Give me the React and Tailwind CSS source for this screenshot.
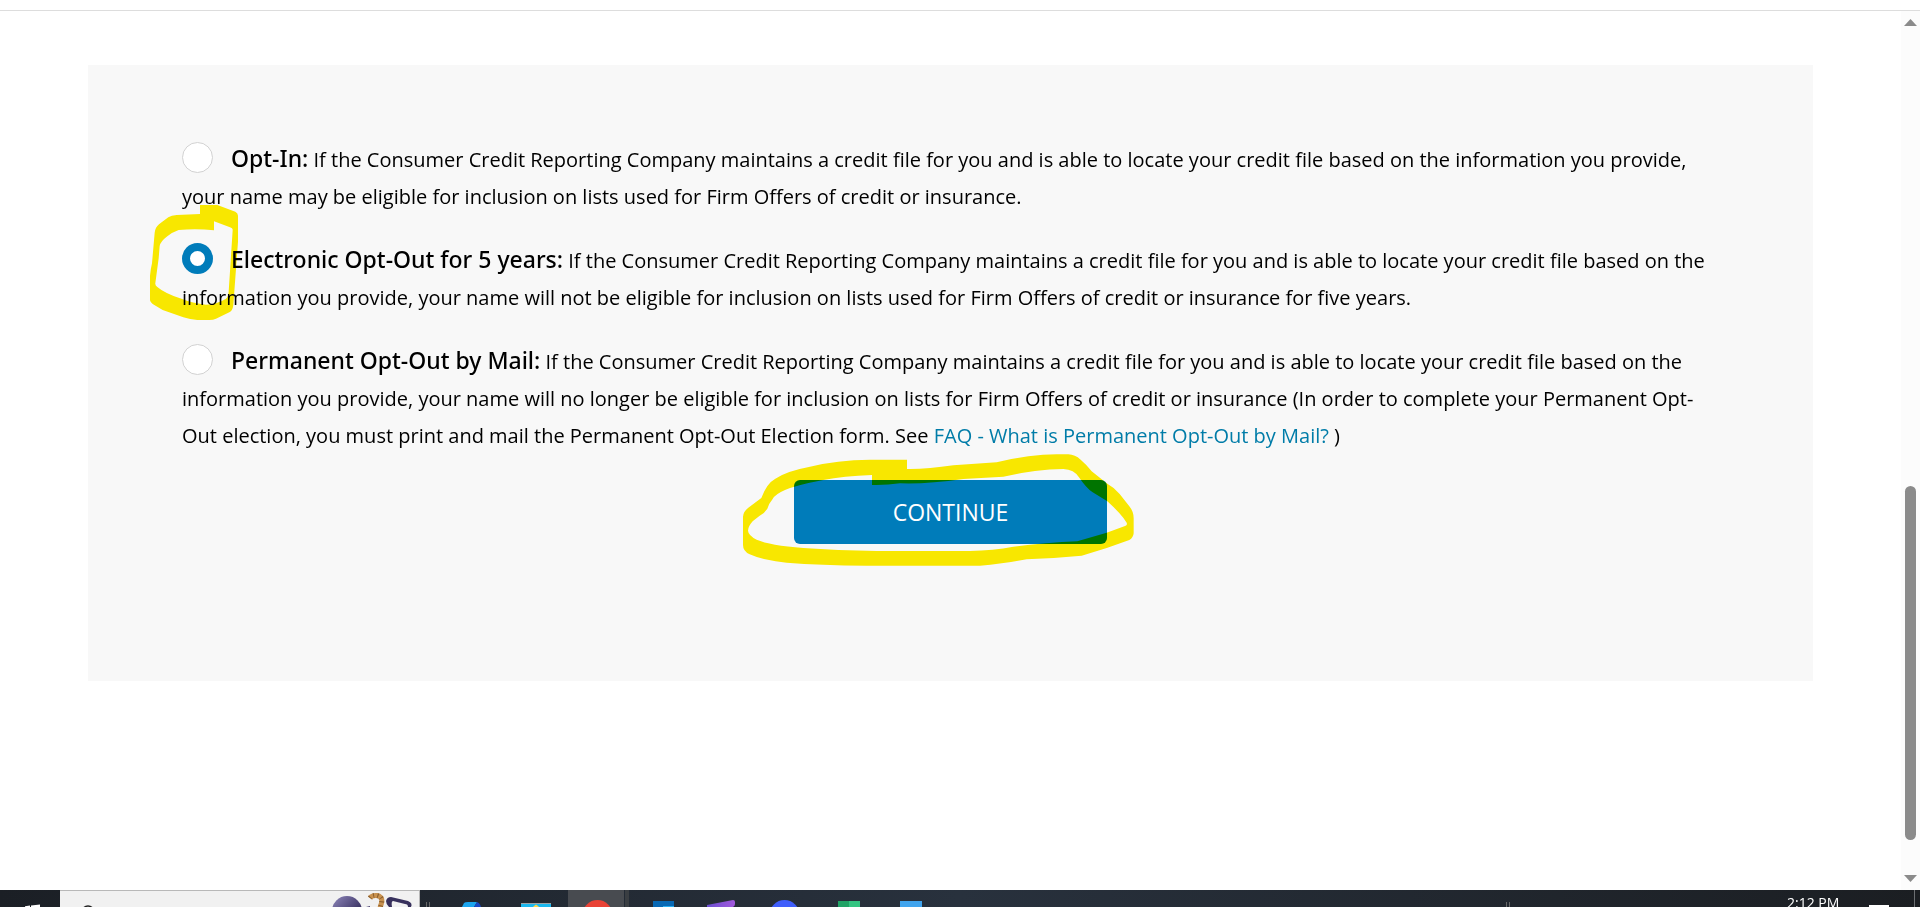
import React, { useState } from 'react';

const OPTIONS = [
    {
        id: 'opt-in',
        title: 'Opt-In:',
        text: 'If the Consumer Credit Reporting Company maintains a credit file for you and is able to locate your credit file based on the information you provide, your name may be eligible for inclusion on lists used for Firm Offers of credit or insurance.',
    },
    {
        id: 'opt-out-electronic',
        title: 'Electronic Opt-Out for 5 years:',
        text: 'If the Consumer Credit Reporting Company maintains a credit file for you and is able to locate your credit file based on the information you provide, your name will not be eligible for inclusion on lists used for Firm Offers of credit or insurance for five years.',
        marked: true,
    },
    {
        id: 'opt-out-mail',
        title: 'Permanent Opt-Out by Mail:',
        text: 'If the Consumer Credit Reporting Company maintains a credit file for you and is able to locate your credit file based on the information you provide, your name will no longer be eligible for inclusion on lists for Firm Offers of credit or insurance (In order to complete your Permanent Opt-Out election, you must print and mail the Permanent Opt-Out Election form. See ',
        link: 'FAQ - What is Permanent Opt-Out by Mail?',
    },
];

// Highlighter stroke around the selected radio
const RadioMark = () => (
    <svg
        className="absolute -left-8 -top-[38px] w-[89px] h-[116px] max-w-none mix-blend-multiply pointer-events-none"
        viewBox="60 255 267 348"
        aria-hidden="true"
    >
        <path
            fill="#ffee00"
            fillRule="evenodd"
            d="M210 255H262L316 275Q324 279 324 287V365L310 555Q308 572 298 577L258 596Q250 600 238 600H202Q180 599 160 592L98 570L68 552Q59 546 59 532V480Q61 450 66 430L74 338Q76 322 87 313L115 292Q124 286 140 285L210 282ZM252 304V331Q200 325 146 330Q128 336 112 349Q92 364 89 378L86 415L76 490Q75 496 82 501Q103 519 150 535Q190 551 228 554Q262 552 288 536Q295 530 296 515L308 330Q309 325 300 322Z"
        />
    </svg>
);

// Highlighter stroke around the continue button
const ButtonMark = () => (
    <svg
        className="absolute -left-[52px] -top-[27px] w-[394px] h-[114px] max-w-none mix-blend-multiply pointer-events-none"
        viewBox="66 39 1182 342"
        aria-hidden="true"
    >
        <path
            fill="#ffee00"
            fillRule="evenodd"
            d="M561 59V87Q620 88 700 76L830 67Q930 43 1010 43H1045Q1065 44 1082 59Q1098 72 1115 94L1162 131Q1184 143 1199 162L1228 199Q1241 215 1241 235V280Q1240 293 1228 300Q1160 326 1085 347Q1000 355 920 358Q840 373 780 377H440Q300 376 200 368Q130 362 89 343Q69 334 69 315V230Q70 215 84 204L124 174Q140 130 166 116Q200 93 270 80Q350 60 450 59ZM456 105Q370 108 310 120Q230 135 195 150Q165 163 158 177Q147 190 142 206Q135 218 118 228L98 244Q84 260 84 272Q85 286 110 299Q150 316 250 324Q350 331 470 333H750Q820 331 880 320Q980 308 1072 304L1160 278L1215 258Q1223 255 1220 248Q1202 220 1162 184L1118 157Q1098 143 1078 113Q1062 88 1030 87Q950 87 850 110L730 117Q620 133 540 130Q500 136 456 135Z"
        />
    </svg>
);

const ScrollBar = () => (
    <div className="w-[19px] shrink-0 bg-[#fcfcfc] flex flex-col items-center py-2" aria-hidden="true">
        <svg className="w-[13px] h-[7px]" viewBox="0 0 13 7"><path fill="#8b8b8b" d="M6.5 0L13 7H0Z" /></svg>
        <div className="grow-[461]" />
        <div className="grow-[354] w-[11px] rounded-full bg-[#8b8b8b]" />
        <div className="grow-[35]" />
        <svg className="w-[13px] h-[7px]" viewBox="0 0 13 7"><path fill="#8b8b8b" d="M0 0H13L6.5 7Z" /></svg>
    </div>
);

const TaskBar = () => (
    <div className="h-[17px] shrink-0 overflow-hidden flex bg-linear-to-r from-[#1b1f25] via-[#28313d] to-[#1b1e22]">
        <div className="w-15 shrink-0">
            <svg className="w-15 h-[17px]" viewBox="0 0 60 17"><path fill="#fff" d="M25 16.3L30 15.6V17H25ZM31 15.5L40 14.5V17H31Z" /></svg>
        </div>
        <div className="w-90 shrink-0 bg-[#f1f1f1] border-t border-r border-[#b8b8b8] flex justify-between">
            <svg className="w-10 h-4" viewBox="0 0 40 16"><circle cx="28" cy="21" r="6" fill="none" stroke="#222" strokeWidth="1.5" /></svg>
            <svg className="w-25 h-4" viewBox="0 0 100 16">
                <defs>
                    <linearGradient id="ball" x1="0" y1="0" x2="1" y2="1">
                        <stop offset="0" stopColor="#8f88bb" />
                        <stop offset="0.6" stopColor="#453d6e" />
                        <stop offset="1" stopColor="#2c264c" />
                    </linearGradient>
                </defs>
                <circle cx="28" cy="20" r="15" fill="url(#ball)" />
                <path d="M47 16L51 15V16Z" fill="#453d6e" />
                <path d="M51 7Q53 4 58 4.500Q64 6 62.500 12L61 17" fill="none" stroke="#c9924f" strokeWidth="5" />
                <path d="M51 7Q53 4 58 4.500Q64 6 62.500 12L61 17" fill="none" stroke="#8a5f2e" strokeWidth="5" strokeDasharray="1 3" />
                <path d="M67 10Q68 6 72 6L89 10Q94 12 92 16H89Q89 13 86 13L74 10Q72 10 73 16H70Q67 13 67 10Z" fill="#37305c" />
            </svg>
        </div>
        <svg className="w-[540px] h-[17px] shrink-0" viewBox="420 0 540 17" aria-hidden="true">
            <path stroke="#666" d="M426.500 12V17M429.500 12V17" />
            <path fill="#1ba4ee" d="M462 17L464 13Q465 12 468 12H477L474 17Z" />
            <path fill="#1747c5" d="M477 12Q480 13 481 17H474Z" />
            <path fill="#1bb8ef" d="M521 13H551V17H521Z" />
            <path fill="#9aa3a8" d="M521 13H551V14H521Z" />
            <path fill="#ffd84a" d="M533 17L534 16L536 14.500L538 16L539 17Z" />
            <path fill="#484b50" d="M568 0H624V17H568Z" />
            <path fill="#3a3e42" d="M625 0H629V17H625Z" />
            <circle cx="597.5" cy="25" r="15" fill="#e94235" />
            <path fill="#0868b4" d="M653 11H674V17H653Z" />
            <path fill="#2aaef0" d="M663 16H674V17H663Z" />
            <linearGradient id="clip">
                <stop offset="0" stopColor="#6a4fd0" />
                <stop offset="1" stopColor="#a259dc" />
            </linearGradient>
            <path fill="url(#clip)" d="M707 15L733 10Q735 10 735 12V14Q735 16 733 17H707Z" />
            <circle cx="784.5" cy="25" r="15" fill="#3f5efb" />
            <path fill="#21a366" d="M838 11H849V17H838Z" />
            <path fill="#33c481" d="M849 11H860V17H849Z" />
            <path fill="#40a4ee" d="M900 11H922V17H900Z" />
        </svg>
        <div className="grow" />
        <svg className="w-4 h-[17px] shrink-0" viewBox="0 0 16 17"><path stroke="#666" d="M3.500 12V17M6.500 12V17" /></svg>
        <div className="w-[268px] shrink-0" />
        <time className="w-[76px] shrink-0 pt-[3px] text-[14px] leading-5 text-white whitespace-nowrap">2:12 PM</time>
        <svg className="w-[51px] h-[17px] shrink-0" viewBox="0 0 51 17">
            <path fill="#fff" d="M6 15H26V17H6Z" />
        </svg>
        <div className="w-[6px] shrink-0 border-l border-[#6c6f72]" />
    </div>
);

const App = () => {
    const [selected, setSelected] = useState('opt-out-electronic');

    return (
        <div className="h-screen flex flex-col overflow-hidden bg-white font-['Open_Sans',sans-serif] text-black">
            <div className="h-[11px] shrink-0 border-b border-[#dddddd]" />
            <div className="flex grow min-h-0">
                <main className="grow px-22 pt-[54px]">
                    <form
                        className="bg-[#f8f8f8] px-[94px] pt-[76px] pb-[137px]"
                        onSubmit={(e) => e.preventDefault()}
                    >
                        <div className="space-y-[27px] text-[20px] leading-[37px]">
                            {OPTIONS.map((option) => (
                                <div key={option.id}>
                                    <span className="relative inline-block size-[31px] mr-[18px] align-[-6px] leading-none">
                                        <input
                                            type="radio"
                                            id={option.id}
                                            name="election"
                                            checked={selected === option.id}
                                            onChange={() => setSelected(option.id)}
                                            className="block appearance-none size-[31px] rounded-full bg-white border border-[#d2d2d2] checked:border-8 checked:border-[#007cba]"
                                        />
                                        {option.marked && <RadioMark />}
                                    </span>
                                    <label htmlFor={option.id}>
                                        <span className="font-['Noto_Sans','Open_Sans',sans-serif] text-[23px] leading-none font-medium">{option.title}</span> {option.text}
                                    </label>
                                    {option.link && (
                                        <>
                                            <a href="#faq" className="text-[#007ca8]">{option.link}</a> )
                                        </>
                                    )}
                                </div>
                            ))}
                        </div>
                        <div className="relative w-[313px] mx-auto mt-[26px]">
                            <button
                                type="submit"
                                className="block w-full h-16 rounded-md bg-[#007cba] text-white text-[23px]"
                            >
                                CONTINUE
                            </button>
                            <ButtonMark />
                        </div>
                    </form>
                </main>
                <ScrollBar />
            </div>
            <TaskBar />
        </div>
    );
};

export default App;
